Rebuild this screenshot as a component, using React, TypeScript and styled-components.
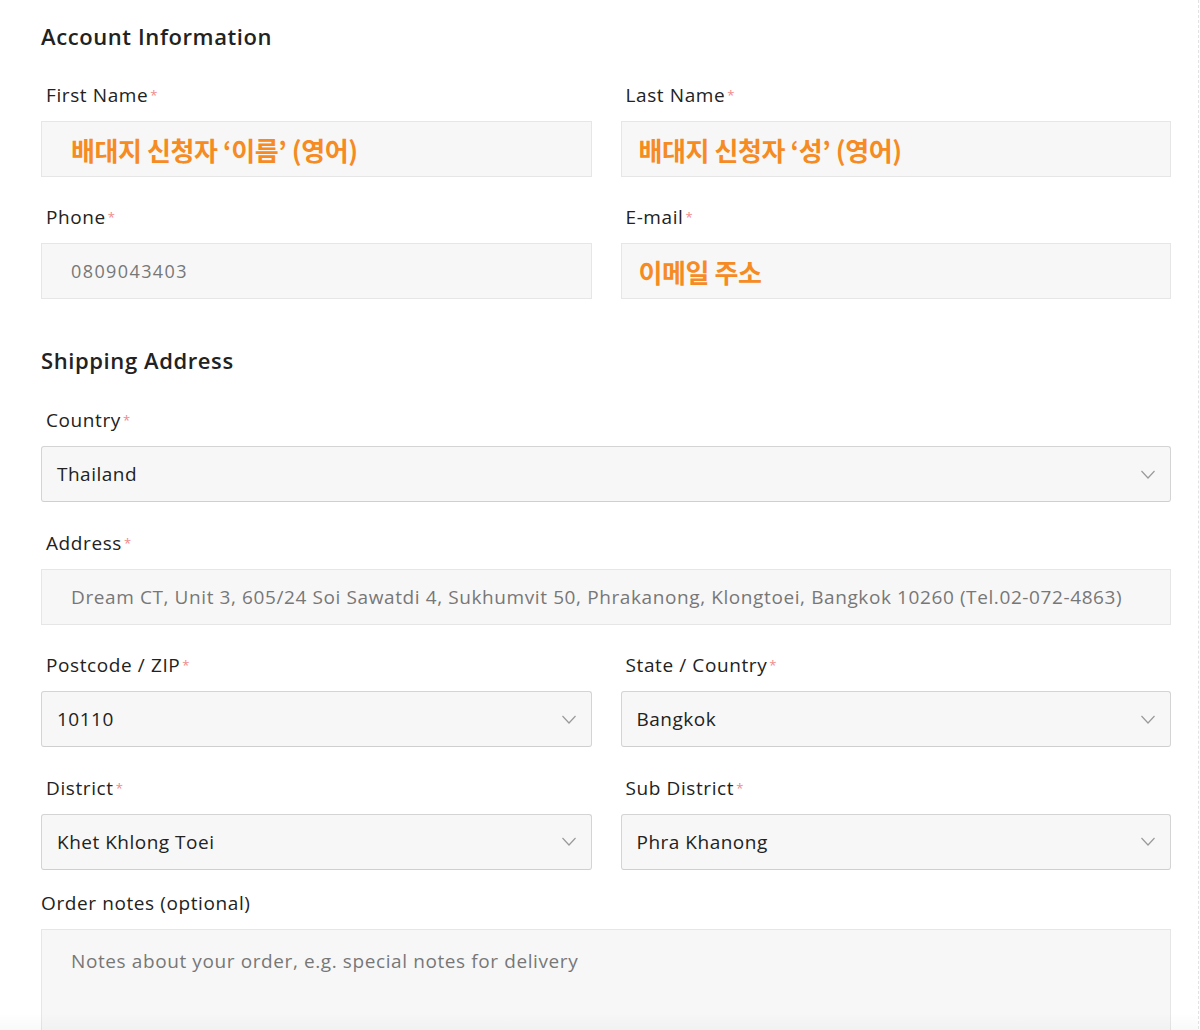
import React from 'react'
import styled, { createGlobalStyle } from 'styled-components'

const GlobalStyle = createGlobalStyle`
  html, body {
    margin: 0;
    padding: 0;
    background: #fff;
  }
  body {
    font-family: "Open Sans", "Noto Sans", sans-serif;
    color: #222;
  }
`

const Page = styled.div`
  width: 1199px;
  min-height: 1030px;
  box-sizing: border-box;
  border-right: 1px dashed #e2e2e2;
  padding: 24px 27px 0 41px;
  position: relative;
  overflow: hidden;
`

const Section = styled.section<{ gap?: number }>`
  display: flex;
  flex-direction: column;
  margin-bottom: ${p => p.gap || 0}px;
`

const Heading = styled.h3<{ after?: number }>`
  margin: 0 0 ${p => p.after ?? 34}px;
  font-size: 22px;
  line-height: 24px;
  font-weight: 600;
  letter-spacing: 0.6px;
  color: #222;
`

const Grid = styled.div<{ rowGap?: number }>`
  display: grid;
  grid-template-columns: 1fr 1fr;
  column-gap: 29px;
  row-gap: ${p => p.rowGap ?? 27}px;
`

const Field = styled.div<{ wide?: boolean }>`
  display: flex;
  flex-direction: column;
  gap: 13px;
  grid-column: ${p => (p.wide ? '1 / -1' : 'auto')};
`

const Label = styled.label<{ flush?: boolean }>`
  font-size: 19px;
  line-height: 26px;
  letter-spacing: 0.6px;
  color: #222;
  padding-left: ${p => (p.flush ? 0 : 5)}px;
`

const Req = styled.span`
  color: #f08a8a;
  font-size: 13px;
  vertical-align: top;
  margin-left: 2px;
`

const Box = styled.div<{ indent?: number }>`
  height: 56px;
  box-sizing: border-box;
  display: flex;
  align-items: center;
  background: #f7f7f7;
  border: 1px solid #e6e6e6;
  padding-left: ${p => p.indent ?? 29}px;
  font-size: 19px;
  letter-spacing: 0.6px;
  color: #777;
  white-space: nowrap;
`

const Digits = styled.span`
  font-size: 18px;
  letter-spacing: 1.4px;
`

const Note = styled.span`
  font-family: "Noto Sans CJK KR", sans-serif;
  font-weight: 700;
  font-size: 26px;
  color: #f58b22;
  letter-spacing: -0.4px;
`

const Select = styled.div`
  height: 56px;
  box-sizing: border-box;
  display: flex;
  align-items: center;
  justify-content: space-between;
  background: #f7f7f7;
  border: 1px solid #d4d4d4;
  border-bottom-color: #cfcfcf;
  border-radius: 3px;
  padding: 0 15px 0 15px;
  font-size: 19px;
  letter-spacing: 0.5px;
  color: #222;
`

const TextArea = styled.div`
  height: 120px;
  box-sizing: border-box;
  background: #f7f7f7;
  border: 1px solid #e6e6e6;
  padding: 18px 29px;
  font-size: 19px;
  letter-spacing: 0.6px;
  color: #777;
`

const BottomFade = styled.div`
  position: absolute;
  left: 0;
  right: 0;
  bottom: 0;
  height: 36px;
  background: linear-gradient(to bottom, rgba(0, 0, 0, 0), rgba(0, 0, 0, 0.05));
  pointer-events: none;
`

const Chevron = () => (
  <svg width="14" height="9" viewBox="0 0 14 9" fill="none">
    <polyline points="0.5,1 7,8 13.5,1" stroke="#9a9a9a" strokeWidth="1.2" />
  </svg>
)

const LabelText: React.FC<{ text: string; required?: boolean; flush?: boolean }> = ({ text, required = true, flush }) => (
  <Label flush={flush}>
    {text}
    {required && <Req>*</Req>}
  </Label>
)

const Dropdown: React.FC<{ value: string }> = ({ value }) => (
  <Select>
    <span>{value}</span>
    <Chevron />
  </Select>
)

export default function App() {
  return (
    <>
      <GlobalStyle />
      <Page>
        <Section gap={49}>
          <Heading>Account Information</Heading>
          <Grid>
            <Field>
              <LabelText text="First Name" />
              <Box>
                <Note>배대지 신청자 ‘이름’ (영어)</Note>
              </Box>
            </Field>
            <Field>
              <LabelText text="Last Name" />
              <Box indent={17}>
                <Note>배대지 신청자 ‘성’ (영어)</Note>
              </Box>
            </Field>
            <Field>
              <LabelText text="Phone" />
              <Box>
                <Digits>0809043403</Digits>
              </Box>
            </Field>
            <Field>
              <LabelText text="E-mail" />
              <Box indent={17}>
                <Note>이메일 주소</Note>
              </Box>
            </Field>
          </Grid>
        </Section>

        <Section>
          <Heading after={35}>Shipping Address</Heading>
          <Grid rowGap={27.5}>
            <Field wide>
              <LabelText text="Country" />
              <Dropdown value="Thailand" />
            </Field>
            <Field wide>
              <LabelText text="Address" />
              <Box>
                Dream CT, Unit 3, 605/24 Soi Sawatdi 4, Sukhumvit 50, Phrakanong, Klongtoei, Bangkok 10260 (Tel.02-072-4863)
              </Box>
            </Field>
            <Field>
              <LabelText text="Postcode / ZIP" />
              <Dropdown value="10110" />
            </Field>
            <Field>
              <LabelText text="State / Country" />
              <Dropdown value="Bangkok" />
            </Field>
            <Field>
              <LabelText text="District" />
              <Dropdown value="Khet Khlong Toei" />
            </Field>
            <Field>
              <LabelText text="Sub District" />
              <Dropdown value="Phra Khanong" />
            </Field>
          </Grid>
          <Field style={{ marginTop: 20 }}>
            <LabelText text="Order notes (optional)" required={false} flush />
            <TextArea>Notes about your order, e.g. special notes for delivery</TextArea>
          </Field>
        </Section>
        <BottomFade />
      </Page>
    </>
  )
}
